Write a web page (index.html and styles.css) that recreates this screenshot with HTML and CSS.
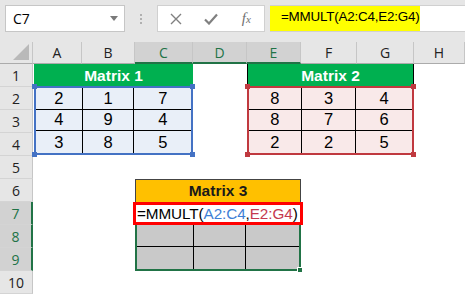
FILE: index.html
```html
<!DOCTYPE html>
<html lang="en">

<head>
    <meta charset="UTF-8">
    <title>MMULT</title>
    <link rel="stylesheet" href="styles.css">
</head>

<body>
    <!-- Formula bar -->
    <div class="formula-bar">
        <div class="name-box">
            <span>C7</span>
            <svg class="arrow" width="8" height="5" viewBox="0 0 8 5"><path d="M0 0H8L4 5Z" fill="#7a7a7a"/></svg>
        </div>
        <div class="grip"><i></i><i></i><i></i></div>
        <div class="fx-buttons">
            <svg width="12" height="12" viewBox="0 0 12 12"><path d="M1 1L11 11M11 1L1 11" stroke="#808080" stroke-width="1.4"/></svg>
            <svg width="14" height="12" viewBox="0 0 14 12"><path d="M1 6.5L5 10.5L13 1.5" stroke="#808080" stroke-width="2.2" fill="none"/></svg>
            <span class="fx">f<small>x</small></span>
        </div>
        <div class="formula-input">
            <span class="formula-hl">=MMULT(A2:C4,E2:G4)</span>
        </div>
    </div>

    <!-- Sheet -->
    <div class="sheet">
        <div class="corner"><svg width="16" height="16" viewBox="0 0 16 16"><path d="M16 0V16H0Z" fill="#b9b9b9"/></svg></div>
        <div class="col-head">A</div>
        <div class="col-head">B</div>
        <div class="col-head sel">C</div>
        <div class="col-head sel">D</div>
        <div class="col-head sel">E</div>
        <div class="col-head">F</div>
        <div class="col-head">G</div>
        <div class="col-head">H</div>

        <div class="row-head" style="grid-row: 2">1</div>
        <div class="row-head" style="grid-row: 3">2</div>
        <div class="row-head" style="grid-row: 4">3</div>
        <div class="row-head" style="grid-row: 5">4</div>
        <div class="row-head" style="grid-row: 6">5</div>
        <div class="row-head" style="grid-row: 7">6</div>
        <div class="row-head sel" style="grid-row: 8">7</div>
        <div class="row-head sel" style="grid-row: 9">8</div>
        <div class="row-head sel" style="grid-row: 10">9</div>
        <div class="row-head" style="grid-row: 11">10</div>

        <!-- Matrix 1 -->
        <div class="title green m1-title">Matrix 1</div>
        <div class="matrix blue m1-body">
            <div>2</div><div>1</div><div>7</div>
            <div>4</div><div>9</div><div>4</div>
            <div>3</div><div>8</div><div>5</div>
            <b class="h tl"></b><b class="h tr"></b><b class="h bl"></b><b class="h br"></b>
        </div>

        <!-- Matrix 2 -->
        <div class="title green boxed m2-title">Matrix 2</div>
        <div class="matrix red m2-body">
            <div>8</div><div>3</div><div>4</div>
            <div>8</div><div>7</div><div>6</div>
            <div>2</div><div>2</div><div>5</div>
            <b class="h tl"></b><b class="h tr"></b><b class="h bl"></b><b class="h br"></b>
        </div>

        <!-- Matrix 3 -->
        <div class="title orange m3-title">Matrix 3</div>
        <div class="m3-formula">=MMULT(<span class="ref-a">A2:C4</span>,<span class="ref-b">E2:G4</span>)</div>
        <div class="matrix grey m3-body">
            <div></div><div></div><div></div>
            <div></div><div></div><div></div>
            <b class="h br"></b>
        </div>
    </div>
</body>

</html>
```

FILE: styles.css
```css
* {
    margin: 0;
    padding: 0;
    box-sizing: border-box;
}

body {
    width: 465px;
    height: 294px;
    overflow: hidden;
    background: #ffffff;
    font-family: "Liberation Sans", Arial, sans-serif;
    color: #000;
}

/* formula bar */
.formula-bar {
    display: flex;
    align-items: flex-start;
    height: 42px;
    padding: 5px 0 0 5px;
    background: #e6e6e6;
}

.name-box {
    display: flex;
    align-items: center;
    justify-content: space-between;
    width: 120px;
    height: 27px;
    padding: 0 6px 0 7px;
    background: #fff;
    border: 1px solid #c6c6c6;
    font-family: "Open Sans", sans-serif;
    font-size: 14px;
}

.grip {
    display: flex;
    flex-direction: column;
    gap: 2px;
    width: 32px;
    height: 27px;
    align-items: center;
    justify-content: center;
}

.grip i {
    width: 2px;
    height: 2px;
    background: #b0b0b0;
}

.fx-buttons {
    display: grid;
    grid-template-columns: repeat(3, 1fr);
    justify-items: center;
    align-items: center;
    width: 108px;
    height: 27px;
    background: #fff;
    border: 1px solid #d0d0d0;
}

.fx {
    font-family: "Liberation Serif", serif;
    font-style: italic;
    font-size: 15px;
    color: #707070;
}

.fx small {
    font-size: 11px;
}

.formula-input {
    flex: 1;
    height: 27px;
    margin-left: 5px;
    background: #fff;
    border-top: 1px solid #d0d0d0;
    border-bottom: 1px solid #d0d0d0;
}

.formula-hl {
    display: inline-block;
    height: 100%;
    width: 150px;
    padding: 3px 0 0 11px;
    background: #ffff00;
    font-size: 13.4px;
    letter-spacing: -0.2px;
}

/* grid */
.sheet {
    display: grid;
    grid-template-columns: 33px 49px 53px 58px 54px 54px 56px 57px 51px;
    grid-template-rows: 22px repeat(10, 23px);
}

.corner {
    display: flex;
    align-items: flex-end;
    justify-content: flex-end;
    padding: 0 3px 3px 0;
    background: #e6e6e6;
    border-right: 1px solid #c6c6c6;
    border-bottom: 1px solid #ababab;
}

.col-head {
    display: flex;
    align-items: center;
    justify-content: center;
    background: #e6e6e6;
    border-right: 1px solid #c6c6c6;
    border-bottom: 1px solid #ababab;
    font-family: "Open Sans", sans-serif;
    font-size: 14px;
    color: #222;
}

.col-head.sel {
    background: #d2d2d2;
    color: #217346;
    border-bottom: 2px solid #217346;
}

.row-head {
    grid-column: 1;
    display: flex;
    align-items: center;
    justify-content: center;
    background: #e6e6e6;
    border-right: 1px solid #c6c6c6;
    border-bottom: 1px solid #d4d4d4;
    font-family: "Open Sans", sans-serif;
    font-size: 14px;
    color: #222;
}

.row-head.sel {
    background: #d2d2d2;
    color: #217346;
    border-right: 2px solid #217346;
}

.title {
    display: flex;
    align-items: center;
    justify-content: center;
    font-weight: bold;
    font-size: 15.5px;
}

.green {
    background: #00b050;
    color: #fff;
}

.boxed {
    border-left: 1px solid #000;
    border-right: 1px solid #000;
}

.orange {
    background: #ffc000;
    color: #1a1a1a;
    border: 1px solid #444;
    border-bottom: none;
}

.m1-title { grid-column: 2 / 5; grid-row: 2; margin-left: 1px; }
.m2-title { grid-column: 6 / 9; grid-row: 2; }
.m3-title { grid-column: 4 / 7; grid-row: 7; }

.matrix {
    position: relative;
    display: grid;
    grid-template-columns: 48fr 53fr 58fr;
    grid-auto-rows: 1fr;
    font-size: 16.5px;
}

.matrix div {
    display: flex;
    align-items: center;
    justify-content: center;
    border-right: 1px solid #000;
    border-bottom: 1px solid #000;
}

.matrix div:nth-child(3n) { border-right: none; }

.m1-body {
    grid-column: 2 / 5;
    grid-row: 3 / 6;
    margin: -1px 0 1px 1px;
    background: #e9eff8;
    border: 2px solid #4472c4;
}

.m1-body div:nth-child(n+7) { border-bottom: none; }

.m2-body {
    grid-column: 6 / 9;
    grid-row: 3 / 6;
    margin: -1px 0 1px 0;
    grid-template-columns: 54fr 56fr 57fr;
    background: #f9e9e9;
    border: 2px solid #c0393f;
}

.m2-body div:nth-child(n+7) { border-bottom: none; }

.m3-formula {
    grid-column: 4 / 7;
    grid-row: 8;
    margin: 0 -2px 0 -2px;
    display: flex;
    align-items: center;
    padding-left: 1px;
    border: 3px solid #ff0000;
    font-size: 15.3px;
    letter-spacing: -0.1px;
    white-space: nowrap;
    position: relative;
}

.ref-a { color: #3e7fd6; }
.ref-b { color: #c5384f; }

.m3-body {
    grid-column: 4 / 7;
    grid-row: 9 / 11;
    grid-template-columns: 58fr 54fr 54fr;
    background: #c9c9c9;
    border: 2px solid #217346;
    border-top: none;
}

.m3-body div:nth-child(n+4) { border-bottom: none; }

/* selection handles */
.h {
    position: absolute;
    width: 5px;
    height: 5px;
}

.blue .h { background: #4472c4; }
.red .h { background: #c0393f; }
.grey .h { background: #217346; border: 1px solid #fff; width: 6px; height: 6px; }

.tl { top: -4px; left: -4px; }
.tr { top: -4px; right: -4px; }
.bl { bottom: -4px; left: -4px; }
.br { bottom: -4px; right: -4px; }
```
